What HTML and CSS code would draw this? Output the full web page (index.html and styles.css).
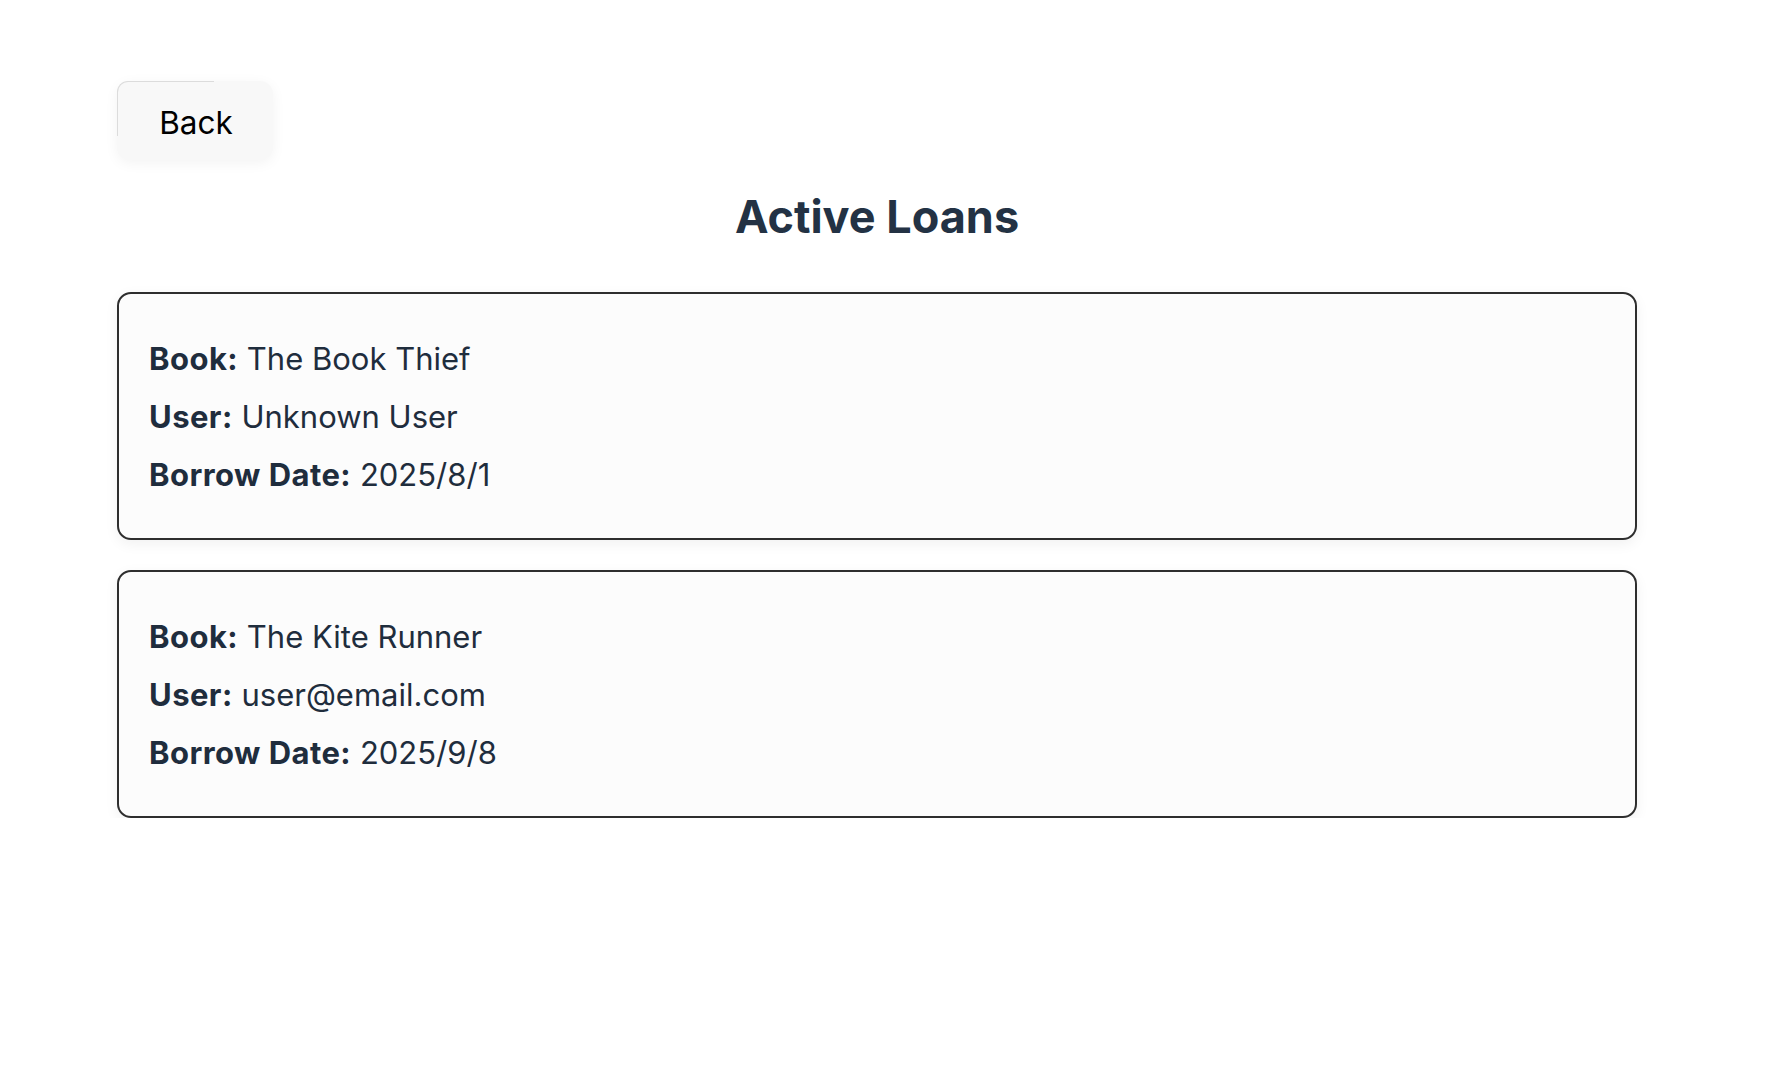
FILE: index.html
```html
<!DOCTYPE html>
<html lang="en">
<head>
<meta charset="utf-8">
<title>Active Loans</title>
<link rel="stylesheet" href="styles.css">
</head>
<body>
<div class="page">
  <button class="back-btn" type="button">Back</button>
  <h1 class="title">Active Loans</h1>
  <div class="loan-list">
    <div class="loan-card">
      <p class="loan-row"><strong>Book:</strong> The Book Thief</p>
      <p class="loan-row"><strong>User:</strong> Unknown User</p>
      <p class="loan-row"><strong>Borrow Date:</strong> 2025/8/1</p>
    </div>
    <div class="loan-card">
      <p class="loan-row"><strong>Book:</strong> The Kite Runner</p>
      <p class="loan-row"><strong>User:</strong> user@email.com</p>
      <p class="loan-row"><strong>Borrow Date:</strong> 2025/9/8</p>
    </div>
  </div>
</div>
</body>
</html>
```
FILE: styles.css
```css
html, body {
  margin: 0;
  padding: 0;
  background: #ffffff;
}
body {
  font-family: Inter, "Noto Sans", sans-serif;
  color: #1f2d3d;
}
.page {
  width: 1520px;
  padding: 81px 0 0 117px;
  display: flex;
  flex-direction: column;
}
.back-btn {
  position: relative;
  align-self: flex-start;
  width: 156px;
  height: 79px;
  border: none;
  border-radius: 13px;
  background: #f8f8f8;
  box-shadow: 0 3px 14px rgba(0, 0, 0, 0.05);
  font-family: Inter, "Noto Sans", sans-serif;
  font-size: 31.5px;
  color: #000;
  padding: 4px 0 0 2px;
  cursor: pointer;
}
.back-btn::before {
  content: "";
  position: absolute;
  left: 0;
  top: 0;
  width: 96px;
  height: 54px;
  border-top: 1.5px solid #dcdcdc;
  border-left: 1.5px solid #dcdcdc;
  border-top-left-radius: 11px;
}
.title {
  margin: 29px 0 0 0;
  text-align: center;
  font-size: 45px;
  font-weight: 700;
  line-height: normal;
  color: #233244;
}
.loan-list {
  margin-top: 48px;
  display: flex;
  flex-direction: column;
  gap: 30px;
}
.loan-card {
  border: 2px solid #2e2e2e;
  border-radius: 14px;
  background: #fcfcfc;
  box-shadow: 0 4px 14px rgba(0, 0, 0, 0.06);
  padding: 41px 30px 39px;
  display: flex;
  flex-direction: column;
  gap: 10px;
}
.loan-row {
  margin: 0;
  font-size: 31px;
  line-height: 48px;
  color: #1f2d3d;
}
.loan-row strong {
  font-weight: 700;
  letter-spacing: 0.45px;
}
```
